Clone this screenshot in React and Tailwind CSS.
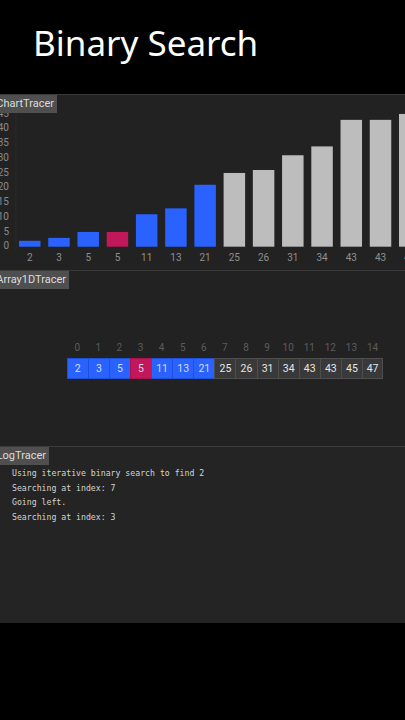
import React from 'react';

const values = [2, 3, 5, 5, 11, 13, 21, 25, 26, 31, 34, 43, 43, 45, 47];
const PINK = 3;
const LAST_BLUE = 6;

const barColor = (i) => (i === PINK ? '#c2185b' : i <= LAST_BLUE ? '#2962ff' : '#bdbdbd');

const logs = [
  'Using iterative binary search to find 2',
  'Searching at index: 7',
  'Going left.',
  'Searching at index: 3',
];

const Label = ({ text, width }) => (
  <div
    className="absolute top-0 left-0 h-[18px] bg-[#4f4f4f] text-[#dcdcdc] text-[11px] leading-[18px] overflow-hidden whitespace-nowrap flex justify-end pr-[3px]"
    style={{ width }}
  >
    {text}
  </div>
);

const Chart = () => {
  const base = 246.7;
  const unit = 2.95;
  return (
    <svg width="405" height="175" viewBox="0 95 405 175" className="block">
      <line x1="16" y1="95" x2="16" y2="250" stroke="#2a2a2a" strokeWidth="1" />
      {[0, 5, 10, 15, 20, 25, 30, 35, 40, 45].map((v) => (
        <text
          key={v}
          x="9"
          y={base - v * unit}
          textAnchor="end"
          dominantBaseline="middle"
          fill="#8a8a8a"
          fontSize="10"
          fontFamily="Roboto, sans-serif"
        >
          {v}
        </text>
      ))}
      {values.map((v, i) => {
        const x = 19 + i * 29.23;
        return (
          <g key={i}>
            <rect x={x} y={base - v * unit} width="21.5" height={v * unit} fill={barColor(i)} />
            <text
              x={x + 10.75}
              y="258"
              textAnchor="middle"
              dominantBaseline="middle"
              fill="#8f8f8f"
              fontSize="10"
              fontFamily="Roboto, sans-serif"
            >
              {v}
            </text>
          </g>
        );
      })}
    </svg>
  );
};

const Cell = ({ v, i, last }) => {
  const bg = i === PINK ? 'bg-[#c2185b] border-[#a8124d]' : i <= LAST_BLUE ? 'bg-[#2962ff] border-[#1e50d8]' : 'bg-[#393939] border-[#4e4e4e]';
  const fg = i <= LAST_BLUE ? 'text-[#d6defa]' : 'text-[#e6e6e6]';
  return (
    <div
      className={`w-[21.1px] h-[21px] shrink-0 border-l border-y ${last ? 'border-r' : ''} ${bg} ${fg} flex items-center justify-center text-[10.5px]`}
    >
      {v}
    </div>
  );
};

export default function App() {
  return (
    <div className="w-[405px] h-[720px] bg-black flex flex-col overflow-hidden" style={{ fontFamily: 'Roboto, "Noto Sans", sans-serif' }}>
      <div className="h-[94px] shrink-0 flex items-center pl-[33px] pb-[10px]">
        <div className="text-white text-[35px] leading-none" style={{ fontFamily: '"Noto Sans", "Open Sans", sans-serif' }}>
          Binary Search
        </div>
      </div>

      <div className="relative h-[176px] shrink-0 bg-[#222222] border-t border-[#3a3a3a] overflow-hidden">
        <Chart />
        <Label text="ChartTracer" width={57} />
      </div>

      <div className="relative h-[176px] shrink-0 bg-[#222222] border-t border-[#3a3a3a] overflow-hidden">
        <Label text="Array1DTracer" width={69} />
        <div className="pt-[71px] pl-[66.7px]">
          <div className="flex h-[12px]">
            {values.map((v, i) => (
              <div key={i} className="w-[21.1px] shrink-0 text-center text-[10px] leading-[12px] text-[#5c5c5c]">
                {i}
              </div>
            ))}
          </div>
          <div className="flex mt-[4px]">
            {values.map((v, i) => (
              <Cell key={i} v={v} i={i} last={i === values.length - 1} />
            ))}
          </div>
        </div>
      </div>

      <div className="relative h-[177px] shrink-0 bg-[#242424] border-t border-[#3a3a3a] overflow-hidden">
        <Label text="LogTracer" width={49} />
        <div className="pt-[19px] pl-[12px] text-[#d4d4d4] text-[8.2px] leading-[14.6px]" style={{ fontFamily: '"DejaVu Sans Mono", "Liberation Mono", monospace' }}>
          {logs.map((l, i) => (
            <div key={i} className="whitespace-pre">{l}</div>
          ))}
        </div>
      </div>
      <div className="flex-1 bg-black" />
    </div>
  );
}
